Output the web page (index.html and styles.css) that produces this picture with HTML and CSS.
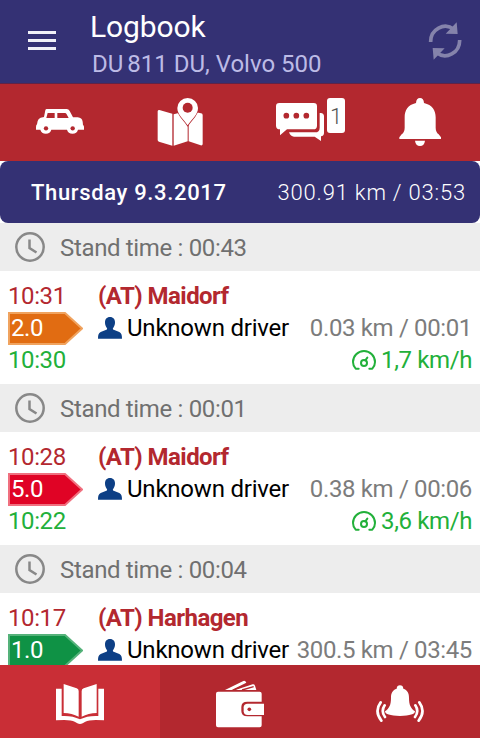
FILE: index.html
```html
<!DOCTYPE html>
<html lang="en">
<head>
    <meta charset="UTF-8">
    <meta name="viewport" content="width=device-width, initial-scale=1.0">
    <title>Logbook</title>
    <link rel="stylesheet" href="styles.css">
</head>
<body>
    <!-- Shared icons -->
    <svg class="icon-defs">
        <symbol id="icon-clock" viewBox="0 0 30 30">
            <circle cx="15" cy="15" r="13.700" fill="none" stroke="#888" stroke-width="2.500"/>
            <path d="M14.500 7.500v8.500l7 4.500" fill="none" stroke="#888" stroke-width="2.500"/>
        </symbol>
        <symbol id="icon-person" viewBox="0 0 72 66">
            <path fill="#0d3f85" d="M36 0c10 0 15 7 15 16 0 7-2 12-5 16-2 2-2 5 1 6l17 7c6 3 8 8 8 20H0c0-12 2-17 8-20l17-7c3-1 3-4 1-6-3-4-5-9-5-16C21 7 26 0 36 0z"/>
        </symbol>
        <symbol id="icon-speed" viewBox="0 0 72 60">
            <g fill="none" stroke="#22b03a" stroke-width="6" stroke-linecap="round" stroke-linejoin="round">
                <path d="M20 56H11C5 50 3 43 3 36a33 33 0 0 1 66 0c0 7-2 14-8 20H52"/>
                <circle cx="36" cy="39" r="9"/>
                <path d="M40 31l6-8"/>
            </g>
        </symbol>
    </svg>

    <header>
        <button class="menu-button">
            <span></span>
            <span></span>
            <span></span>
        </button>
        <div class="titles">
            <h1>Logbook</h1>
            <div class="vehicle"><span class="plate">DU</span> 811 DU, Volvo 500</div>
        </div>
        <svg class="refresh" viewBox="562 66 102 114">
            <g fill="none" stroke="#8583ab" stroke-width="11">
                <path d="M570 126A44 46 0 0 1 640 88"/>
                <path d="M657 120A44 46 0 0 1 587 158"/>
            </g>
            <path fill="#8583ab" d="M648 67l3 35-36-1zM579 179l-3-35 36 1z"/>
        </svg>
    </header>

    <nav class="toolbar">
        <div class="tool">
            <svg viewBox="108 42 144 144">
                <path fill="#fff" fill-rule="evenodd" d="M133 75H200q6 0 9 6l10 19h14q13 1 15 13l1 10q3 1 3 6v8h-18a17 16 0 0 1-33 0h-47a17 16 0 0 1-33 0h-13v-8q0-6 3-8l2-10q2-8 9-10l10-2 4-20q1-4 4-4zM143 87l-4 15h25V87zM172 87v15h34l-7-13q-1-2-4-2z"/>
                <g fill="#b3282f">
                    <circle cx="138" cy="133" r="6.500"/>
                    <circle cx="218" cy="133" r="6.500"/>
                </g>
            </svg>
        </div>
        <div class="tool">
            <svg viewBox="468 42 144 144">
                <g fill="#fff">
                    <path d="M478 78l39 11v96l-40-12q-4-1-4-5V82q0-4 5-4z"/>
                    <path d="M521 91l42-11v92l-42 13z"/>
                    <path d="M566 80l37 8q5 1 5 5v87q0 5-6 4l-36-12z"/>
                </g>
                <path fill="#fff" stroke="#b3282f" stroke-width="5" paint-order="stroke" d="M563 42a31 30 0 0 1 31 30c0 20-18 32-31 52-13-20-31-32-31-52a31 30 0 0 1 31-30z"/>
                <circle cx="563" cy="71" r="15" fill="#b3282f"/>
            </svg>
        </div>
        <div class="tool">
            <svg viewBox="108 42 144 144">
                <path fill="#fff" d="M239 87h3q10 1 10 10v50q0 9-9 10v14l-19-13h-62q-10 0-15-13h78q14 0 14-14z"/>
                <path fill="#fff" d="M118 57h103q10 0 10 10v58q0 11-11 11h-79l-21 18v-18q-12 0-12-11V67q0-10 10-10z"/>
                <g fill="#b3282f">
                    <circle cx="139" cy="95" r="8.500"/>
                    <circle cx="169" cy="95" r="8.500"/>
                    <circle cx="199" cy="95" r="8.500"/>
                </g>
            </svg>
            <span class="badge">1</span>
        </div>
        <div class="tool">
            <svg viewBox="468 42 144 144">
                <path fill="#fff" d="M540 42q11 0 12 15c25 6 35 22 35 43v31q0 13 9 20l7 9v5H478v-5l7-9q9-7 9-20v-31c0-21 9-37 34-43q1-15 12-15zM525 170h30q-2 16-15 16t-15-16z"/>
            </svg>
        </div>
    </nav>

    <main class="log">
        <div class="day">
            <strong>Thursday 9.3.2017</strong>
            <span>300.91 km / 03:53</span>
        </div>

        <div class="stand">
            <svg><use href="#icon-clock"/></svg>
            <span>Stand time : 00:43</span>
        </div>
        <div class="trip">
            <div class="times">
                <div class="end">10:31</div>
                <div class="tag orange">
                    <svg viewBox="0 0 75 33"><path d="M1 1H57L74 16.500L57 32H1z"/></svg>
                    <span>2.0</span>
                </div>
                <div class="start">10:30</div>
            </div>
            <div class="details">
                <div class="place">(AT) Maidorf</div>
                <div class="driver">
                    <svg><use href="#icon-person"/></svg>
                    <span class="name">Unknown driver</span>
                    <span class="distance">0.03 km / 00:01</span>
                </div>
                <div class="speed">
                    <svg><use href="#icon-speed"/></svg>
                    <span>1,7 km/h</span>
                </div>
            </div>
        </div>

        <div class="stand">
            <svg><use href="#icon-clock"/></svg>
            <span>Stand time : 00:01</span>
        </div>
        <div class="trip">
            <div class="times">
                <div class="end">10:28</div>
                <div class="tag red">
                    <svg viewBox="0 0 75 33"><path d="M1 1H57L74 16.500L57 32H1z"/></svg>
                    <span>5.0</span>
                </div>
                <div class="start">10:22</div>
            </div>
            <div class="details">
                <div class="place">(AT) Maidorf</div>
                <div class="driver">
                    <svg><use href="#icon-person"/></svg>
                    <span class="name">Unknown driver</span>
                    <span class="distance">0.38 km / 00:06</span>
                </div>
                <div class="speed">
                    <svg><use href="#icon-speed"/></svg>
                    <span>3,6 km/h</span>
                </div>
            </div>
        </div>

        <div class="stand">
            <svg><use href="#icon-clock"/></svg>
            <span>Stand time : 00:04</span>
        </div>
        <div class="trip">
            <div class="times">
                <div class="end">10:17</div>
                <div class="tag green">
                    <svg viewBox="0 0 75 33"><path d="M1 1H57L74 16.500L57 32H1z"/></svg>
                    <span>1.0</span>
                </div>
            </div>
            <div class="details">
                <div class="place">(AT) Harhagen</div>
                <div class="driver">
                    <svg><use href="#icon-person"/></svg>
                    <span class="name">Unknown driver</span>
                    <span class="distance">300.5 km / 03:45</span>
                </div>
            </div>
        </div>
    </main>

    <nav class="tabs">
        <div class="tab active">
            <svg viewBox="168 240 144 144">
                <g fill="#fff">
                    <path d="M168 266h17v82q31-2 55 10 24-12 55-10v-82h17v95q-42-4-56 4l-8 5q-8 4-16 0l-8-5q-14-8-56-4z"/>
                    <path d="M191 252l39 13q6 2 6 8v77q-20-10-45-11z"/>
                    <path d="M290 252l-39 13q-6 2-6 8v77q20-10 45-11z"/>
                </g>
            </svg>
        </div>
        <div class="tab">
            <svg viewBox="-72 240 144 144">
                <g fill="#fff">
                    <path d="M-66 275H59q6 0 6 6v24H22q-18 0-18 16v12q0 16 18 16h43v27q0 6-6 6H-66q-6 0-6-6V281q0-6 6-6z"/>
                    <path d="M23 311H72v34H23q-12 0-12-11v-12q0-11 12-11z"/>
                    <path d="M-45 270l55-27q6-2 9 5l-44 22zM-14 270l52-17q5-1 7 4l4 13z"/>
                </g>
                <path stroke="#b3282f" stroke-width="4" fill="none" d="M-20 270l50-21M6 270l35-10"/>
                <circle cx="28" cy="328" r="5.500" fill="#b3282f"/>
            </svg>
        </div>
        <div class="tab">
            <svg viewBox="408 240 144 144">
                <path fill="#fff" d="M480 256q9 0 10 10c12 4 17 13 17 27 0 22 5 31 18 41q0 13-45 14-45-1-45-14c13-10 18-19 18-41 0-14 5-23 17-27q1-10 10-10z"/>
                <g fill="none" stroke="#fff" stroke-width="8" stroke-linecap="round">
                    <path d="M422 307q-20 27 2 55M434 316q-12 18 1 35"/>
                    <path d="M538 307q20 27-2 55M526 316q12 18-1 35"/>
                </g>
            </svg>
        </div>
    </nav>
</body>
</html>
```

FILE: styles.css
```css
* {
    box-sizing: border-box;
}

body {
    margin: 0;
    height: 100vh;
    display: flex;
    flex-direction: column;
    overflow: hidden;
    font-family: Roboto, "Liberation Sans", sans-serif;
    font-size: 24px;
    line-height: 32px;
    white-space: nowrap;
    background: #fff;
}

svg {
    display: block;
    flex: none;
}

.icon-defs {
    display: none;
}

/* Title bar */
header {
    flex: none;
    height: 84px;
    display: flex;
    align-items: flex-start;
    padding: 0 18px 0 28px;
    background: #343174;
    border-bottom: 1px solid #5f2447;
}

.menu-button {
    width: 28px;
    margin: 31px 0 0;
    padding: 0;
    border: none;
    background: none;
    display: flex;
    flex-direction: column;
    gap: 5px;
}

.menu-button span {
    width: 28px;
    height: 3px;
    background: #f1f1f8;
}

.titles {
    flex: 1;
    margin: 10px 0 0 34px;
}

h1 {
    margin: 0;
    font-size: 30px;
    line-height: 34px;
    font-weight: 400;
    letter-spacing: -0.1px;
    color: #fff;
}

.vehicle {
    padding: 4px 0 0 2px;
    color: #bdbbe6;
}

.plate {
    margin-right: -2px;
}

.refresh {
    width: 34px;
    height: 38px;
    margin-top: 22px;
}

/* Red icon bar */
.toolbar {
    flex: none;
    height: 76px;
    display: grid;
    grid-template-columns: repeat(4, 1fr);
    background: #b3282f;
}

.tool {
    position: relative;
    display: flex;
    align-items: center;
    justify-content: center;
}

.tool svg,
.tab svg {
    width: 48px;
    height: 48px;
}

.badge {
    position: absolute;
    left: 87px;
    top: 14px;
    width: 18px;
    height: 35px;
    border-radius: 3px;
    background: #fff;
    color: #555;
    font-size: 22px;
    line-height: 38px;
    font-weight: 300;
    text-align: center;
}

/* Trip list */
.log {
    flex: 1;
    min-height: 0;
    overflow: hidden;
    border-top: 1px solid #b3282f;
}

.day {
    height: 62px;
    display: flex;
    align-items: center;
    justify-content: space-between;
    padding: 2px 14px 0 31px;
    border-radius: 8px;
    background: #343174;
    color: #fff;
    font-size: 22px;
    letter-spacing: 0.8px;
}

.day strong {
    font-weight: 500;
    letter-spacing: 0.65px;
}

.day span {
    font-weight: 300;
}

.stand {
    height: 48px;
    display: flex;
    align-items: center;
    gap: 15px;
    padding-left: 15px;
    background: #ededed;
    color: #707070;
    letter-spacing: -0.34px;
}

.stand span {
    padding-top: 2px;
}

.stand svg {
    width: 30px;
    height: 30px;
}

.trip {
    height: 113px;
    display: flex;
    padding: 9px 8px 0;
}

.times {
    flex: none;
    width: 90px;
    letter-spacing: -0.4px;
}

.end {
    color: #b3282f;
}

.start,
.speed {
    color: #22b03a;
}

.tag {
    position: relative;
    width: 75px;
    height: 33px;
    margin-bottom: -1px;
    padding-left: 3px;
    color: #fff;
}

.tag svg {
    position: absolute;
    left: 0;
    top: 0;
    width: 75px;
    height: 33px;
    stroke-width: 2;
}

.tag span {
    position: relative;
}

.orange svg {
    fill: #e16c12;
    stroke: #f0a35f;
}

.red svg {
    fill: #e00325;
    stroke: #f0707f;
}

.green svg {
    fill: #0f9245;
    stroke: #55b27a;
}

.details {
    flex: 1;
}

.place {
    color: #b3282f;
    font-weight: 700;
    letter-spacing: -0.55px;
}

.driver {
    display: flex;
    align-items: center;
}

.driver svg {
    width: 24px;
    height: 22px;
}

.name {
    margin-left: 5px;
    color: #000;
    letter-spacing: -0.22px;
}

.distance {
    margin-left: auto;
    color: #7c7c7c;
    letter-spacing: -0.36px;
}

.speed {
    display: flex;
    align-items: center;
    justify-content: flex-end;
    gap: 5px;
    letter-spacing: -0.38px;
}

.speed svg {
    width: 24px;
    height: 20px;
}

/* Bottom tabs */
.tabs {
    flex: none;
    height: 73px;
    display: grid;
    grid-template-columns: repeat(3, 1fr);
    background: #b3282f;
}

.tab {
    display: flex;
    align-items: center;
    justify-content: center;
    padding-top: 5px;
}

.tab.active {
    background: #c92e36;
}
```
